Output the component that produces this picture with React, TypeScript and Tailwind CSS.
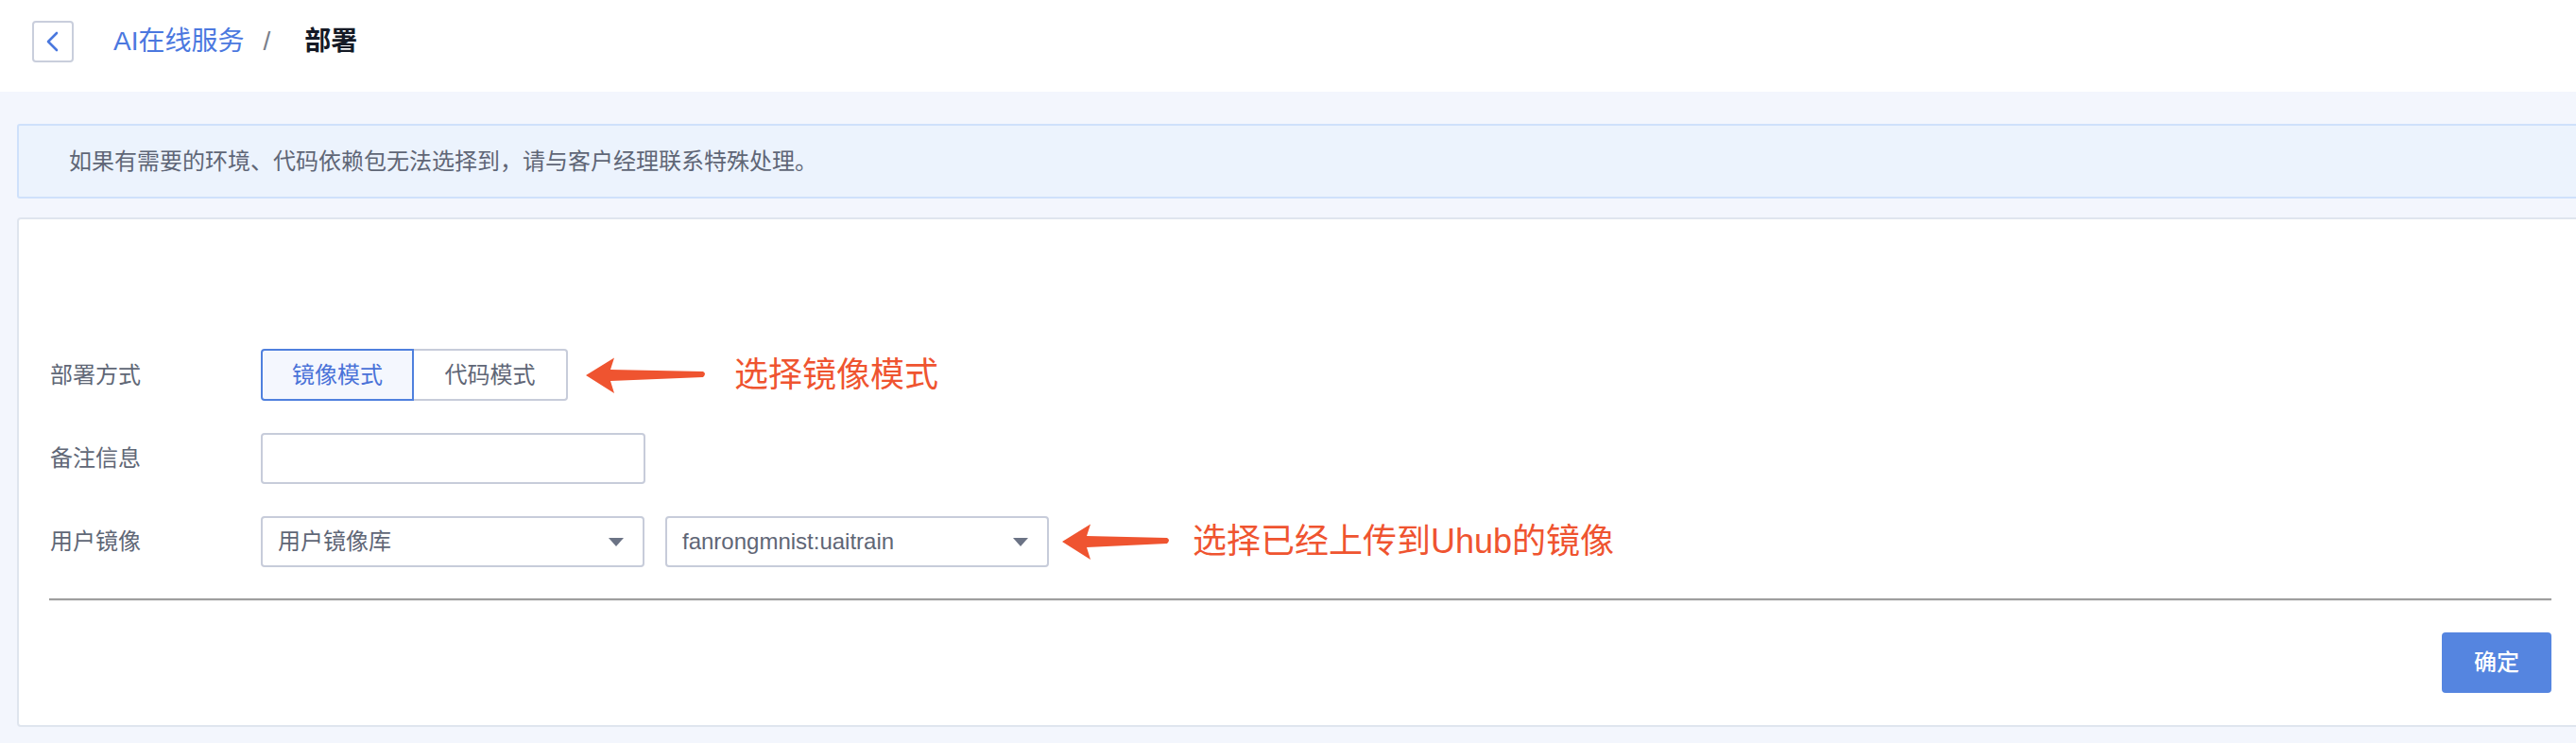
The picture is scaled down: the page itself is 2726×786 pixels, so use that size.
const font = "font-['Liberation_Sans','Noto_Sans_CJK_SC',sans-serif]";

function Arrow({ width }: { width: number }) {
  // hand-drawn style pointer arrow, tip on the left
  return (
    <svg width={width} height={40} viewBox={`0 0 ${width} 40`} className="shrink-0">
      <path
        d={`M1 20 L31 1.5 L27 14 L${width - 4} 16 Q${width} 18.2 ${width - 4} 22 L27 26 L31 39 Z`}
        fill="#ef5430"
      />
    </svg>
  );
}

function Select({ value }: { value: string }) {
  return (
    <div className="w-[406px] h-[54px] border-2 border-[#c7ccda] rounded-[4px] bg-white flex items-center justify-between pl-[16px] pr-[20px]">
      <span className="text-[24px] text-[#5f6676]">{value}</span>
      <svg width="16" height="9" viewBox="0 0 16 9">
        <path d="M0 0 L16 0 L8 9 Z" fill="#6b7385" />
      </svg>
    </div>
  );
}

function Row({ label, children }: { label: string; children: React.ReactNode }) {
  return (
    <div className="flex items-center">
      <div className="w-[224px] text-[24px] text-[#606776] pl-[1px]">{label}</div>
      {children}
    </div>
  );
}

export default function App() {
  return (
    <div className={`w-[2726px] h-[786px] overflow-hidden bg-[#f3f6fd] ${font}`}>
      <header className="h-[97px] bg-white flex items-start pt-[22px] pl-[34px]">
        <div className="flex items-center">
          <button className="w-[44px] h-[44px] border-2 border-[#c9cedc] rounded-[4px] flex items-center justify-center bg-white">
            <svg width="14" height="22" viewBox="0 0 14 22">
              <path d="M11 2 L2 11 L11 20" fill="none" stroke="#4a78de" strokeWidth="2.6" strokeLinecap="round" strokeLinejoin="round" />
            </svg>
          </button>
          <span className="ml-[42px] text-[28px] text-[#4b78df]">AI在线服务</span>
          <span className="ml-[20px] text-[28px] text-[#7a7f8a]">/</span>
          <span className="ml-[36px] text-[28px] font-bold text-[#151a26]">部署</span>
        </div>
      </header>

      <main className="pl-[18px] pt-[34px]">
        <div className="w-[2720px] h-[79px] border-2 border-[#cfe1fb] bg-[#ecf3fd] rounded-[3px] flex items-center pl-[53px]">
          <span className="text-[24px] text-[#5f6676]">
            如果有需要的环境、代码依赖包无法选择到，请与客户经理联系特殊处理。
          </span>
        </div>

        <div className="mt-[20px] w-[2716px] h-[539px] border-2 border-[#dfe5ee] rounded-[4px] bg-white px-[32px] pt-[137px] flex flex-col">
          <div className="flex flex-col gap-[34px]">
            <Row label="部署方式">
              <div className="flex">
                <button className="w-[162px] h-[55px] border-2 border-[#4f80de] bg-[#f4f7fe] rounded-l-[4px] text-[24px] text-[#4a72d8]">
                  镜像模式
                </button>
                <button className="w-[163px] h-[55px] border-2 border-l-0 border-[#c7ccda] bg-white rounded-r-[4px] text-[24px] text-[#5f6676]">
                  代码模式
                </button>
              </div>
              <div className="ml-[18px] flex items-center">
                <Arrow width={129} />
                <span className="ml-[29px] text-[36px] text-[#ef5430]">选择镜像模式</span>
              </div>
            </Row>

            <Row label="备注信息">
              <input className="w-[407px] h-[54px] border-2 border-[#c7ccda] rounded-[4px] bg-white outline-none px-[16px] text-[24px]" />
            </Row>

            <Row label="用户镜像">
              <Select value="用户镜像库" />
              <div className="ml-[22px]">
                <Select value="fanrongmnist:uaitrain" />
              </div>
              <div className="ml-[13px] flex items-center">
                <Arrow width={116} />
                <span className="ml-[23px] text-[36px] text-[#ef5430]">选择已经上传到Uhub的镜像</span>
              </div>
            </Row>
          </div>

          <div className="mt-[33px] h-[3px] border-t-2 border-[#9e9e9e] border-b border-b-[#ececec]" />

          <div className="mt-[33px] flex justify-end">
            <button className="w-[116px] h-[64px] bg-[#5585e0] rounded-[4px] text-[24px] font-medium text-white">
              确定
            </button>
          </div>
        </div>
      </main>
    </div>
  );
}
